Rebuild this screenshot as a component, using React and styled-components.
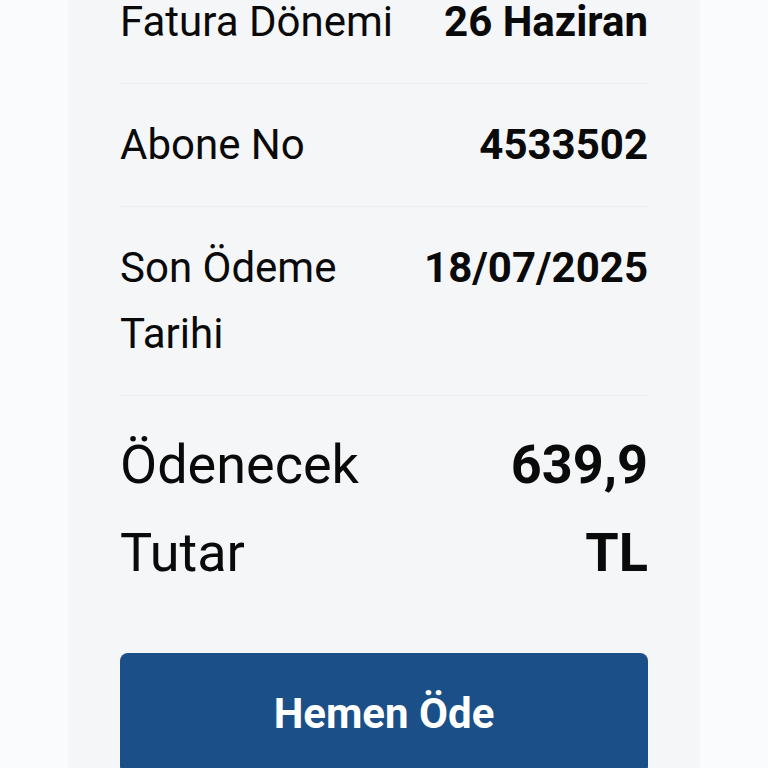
import React from "react";
import styled, { createGlobalStyle } from "styled-components";

const rows = [
  { label: "Fatura Dönemi", value: "26 Haziran" },
  { label: "Abone No", value: "4533502" },
  { label: "Son Ödeme Tarihi", value: "18/07/2025" },
];

const App = () => {
  return (
    <>
      <GlobalStyle />
      <Page>
        <Card>
          {rows.map((row) => (
            <Row key={row.label}>
              <Label>{row.label}</Label>
              <Value>{row.value}</Value>
            </Row>
          ))}

          <Row $total>
            <Label $total>Ödenecek Tutar</Label>
            <Value $total $maxWidth="170px">639,9 TL</Value>
          </Row>

          <PayButton type="button">Hemen Öde</PayButton>
        </Card>
      </Page>
    </>
  );
};

const GlobalStyle = createGlobalStyle`
  html, body {
    margin: 0;
    padding: 0;
    background: #fafbfc;
    overflow: hidden;
  }
`;

const Page = styled.div`
  width: 768px;
  height: 768px;
  overflow: hidden;
  display: flex;
  justify-content: center;
  align-items: flex-start;
  background: #fafbfc;
  font-family: Roboto, "Liberation Sans", sans-serif;
`;

const Card = styled.div`
  width: 632px;
  flex-shrink: 0;
  box-sizing: border-box;
  margin-top: -39px;
  padding: 0 52px 60px;
  background: #f5f6f8;
  display: flex;
  flex-direction: column;
`;

const Row = styled.div`
  display: flex;
  justify-content: space-between;
  align-items: flex-start;
  gap: 24px;
  flex-shrink: 0;
  padding: ${(p) => (p.$total ? "25px 0 0" : "28px 0")};
  border-bottom: ${(p) => (p.$total ? "none" : "1.5px solid #eceef2")};
`;

const Label = styled.div`
  color: #0a0a0a;
  font-size: ${(p) => (p.$total ? "54px" : "42px")};
  line-height: ${(p) => (p.$total ? "88px" : "66px")};
  font-weight: 400;
  flex: 0 1 auto;
`;

const Value = styled.div`
  color: #0a0a0a;
  font-size: ${(p) => (p.$total ? "54px" : "42px")};
  line-height: ${(p) => (p.$total ? "88px" : "66px")};
  font-weight: 700;
  text-align: right;
  flex-shrink: 0;
  max-width: ${(p) => p.$maxWidth || "none"};
`;

const PayButton = styled.button`
  flex-shrink: 0;
  margin-top: 56px;
  height: 121px;
  width: 100%;
  padding: 0;
  border: none;
  border-radius: 8px;
  background: #1a4f87;
  color: #fff;
  font-family: Roboto, "Liberation Sans", sans-serif;
  font-size: 42px;
  font-weight: 700;
  cursor: pointer;
`;

export default App;
